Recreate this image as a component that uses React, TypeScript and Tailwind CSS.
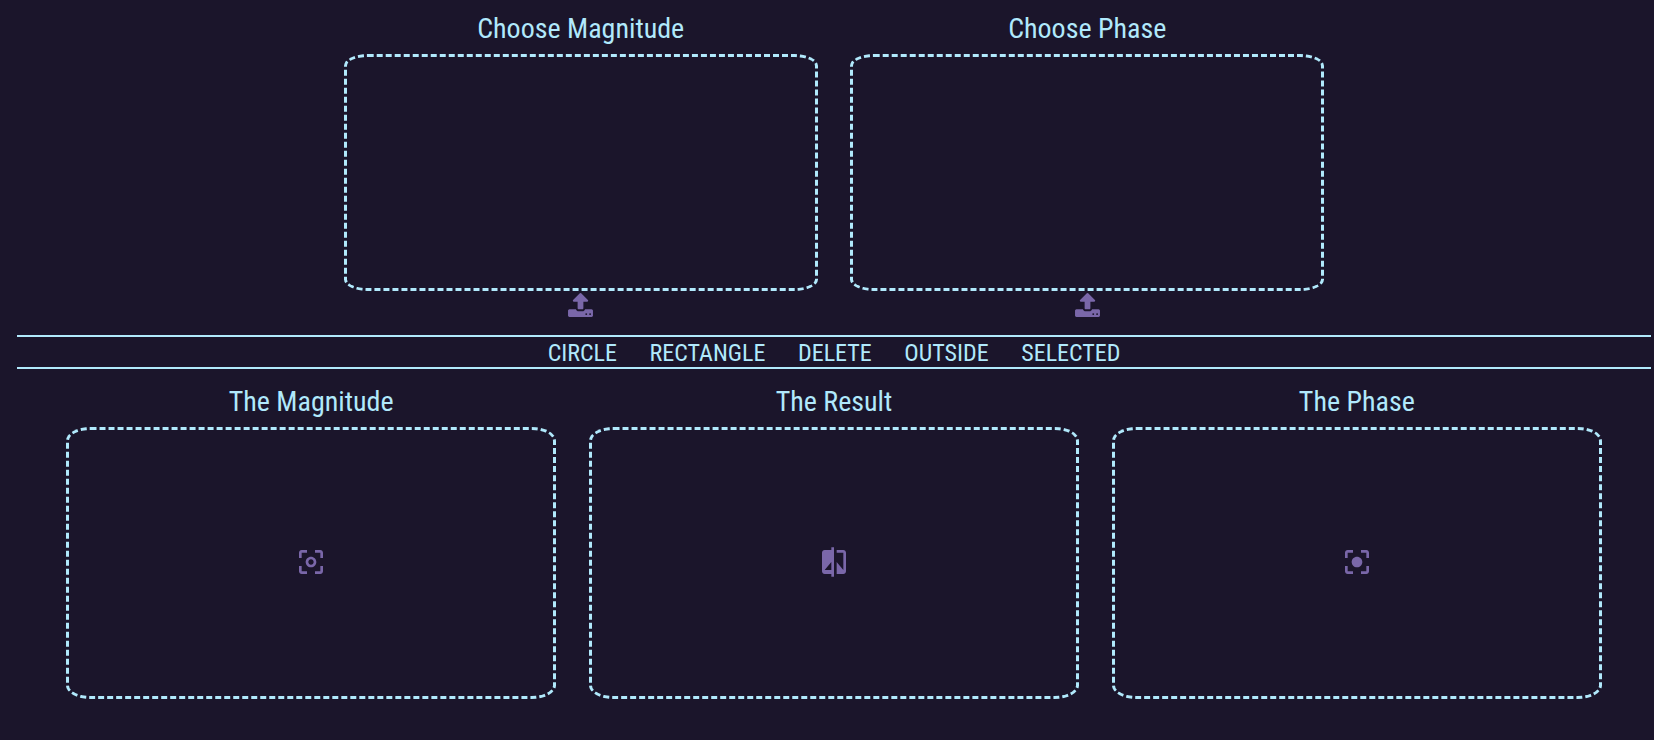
import { MdCenterFocusStrong, MdCenterFocusWeak, MdCompare } from "react-icons/md";
import type { IconType } from "react-icons";

const sources = [
  { title: "Choose Magnitude", id: "magnitude-file" },
  { title: "Choose Phase", id: "phase-file" },
];

const tools = ["CIRCLE", "RECTANGLE", "DELETE", "OUTSIDE", "SELECTED"];

const outputs: { title: string; Icon: IconType }[] = [
  { title: "The Magnitude", Icon: MdCenterFocusWeak },
  { title: "The Result", Icon: MdCompare },
  { title: "The Phase", Icon: MdCenterFocusStrong },
];

function UploadIcon() {
  return (
    <svg viewBox="0 64 1664 1600" fill="currentColor" aria-hidden="true" className="h-6 w-[25px]">
      <path d="M1280 1472q0-26-19-45t-45-19-45 19-19 45 19 45 45 19 45-19 19-45zm256 0q0-26-19-45t-45-19-45 19-19 45 19 45 45 19 45-19 19-45zm128-224v320q0 40-28 68t-68 28h-1472q-40 0-68-28t-28-68v-320q0-40 28-68t68-28h427q21 56 70.500 92t110.500 36h256q61 0 110.500-36t70.500-92h427q40 0 68 28t28 68zm-325-648q-17 40-59 40h-256v448q0 26-19 45t-45 19h-256q-26 0-45-19t-19-45v-448h-256q-42 0-59-40-17-39 14-69l448-448q18-19 45-19t45 19l448 448q31 30 14 69z" />
    </svg>
  );
}

export default function App() {
  return (
    <main className="min-h-screen bg-[#1b152b] pt-2 pr-[3px] pl-[17px] font-['Roboto_Condensed','Roboto',sans-serif] text-[#b1e9fc]">
      <section className="flex justify-center gap-[2%]">
        {sources.map(({ title, id }) => (
          <div key={id} className="flex w-[29%] flex-col items-center">
            <h2 className="mb-1 text-[28px] leading-[42px] whitespace-nowrap">{title}</h2>
            <div className="h-[237px] w-full rounded-[5%] border-3 border-dashed border-[#b1e9fc]" />
            <label htmlFor={id} className="mt-[2px] mb-[18px] cursor-pointer text-[#7a67a9]">
              <UploadIcon />
              <input id={id} type="file" aria-label={title} className="sr-only" />
            </label>
          </div>
        ))}
      </section>

      <nav className="flex h-[34px] items-center justify-center gap-[2%] border-y-2 border-[#b1e9fc] pt-[2px]">
        {tools.map((label) => (
          <button key={label} type="button" className="cursor-pointer text-2xl leading-7 whitespace-nowrap">
            {label}
          </button>
        ))}
      </nav>

      <section className="flex justify-center gap-[2%] pt-3">
        {outputs.map(({ title, Icon }) => (
          <div key={title} className="flex w-[30%] flex-col items-center">
            <h2 className="mb-1 text-[28px] leading-[42px] whitespace-nowrap">{title}</h2>
            <div className="flex h-[272px] w-full items-center justify-center rounded-[5%] border-3 border-dashed border-[#b1e9fc] pb-[2px]">
              <button type="button" aria-label={title} className="cursor-pointer text-[#7a67a9]">
                <Icon className="size-8" />
              </button>
            </div>
          </div>
        ))}
      </section>
    </main>
  );
}
